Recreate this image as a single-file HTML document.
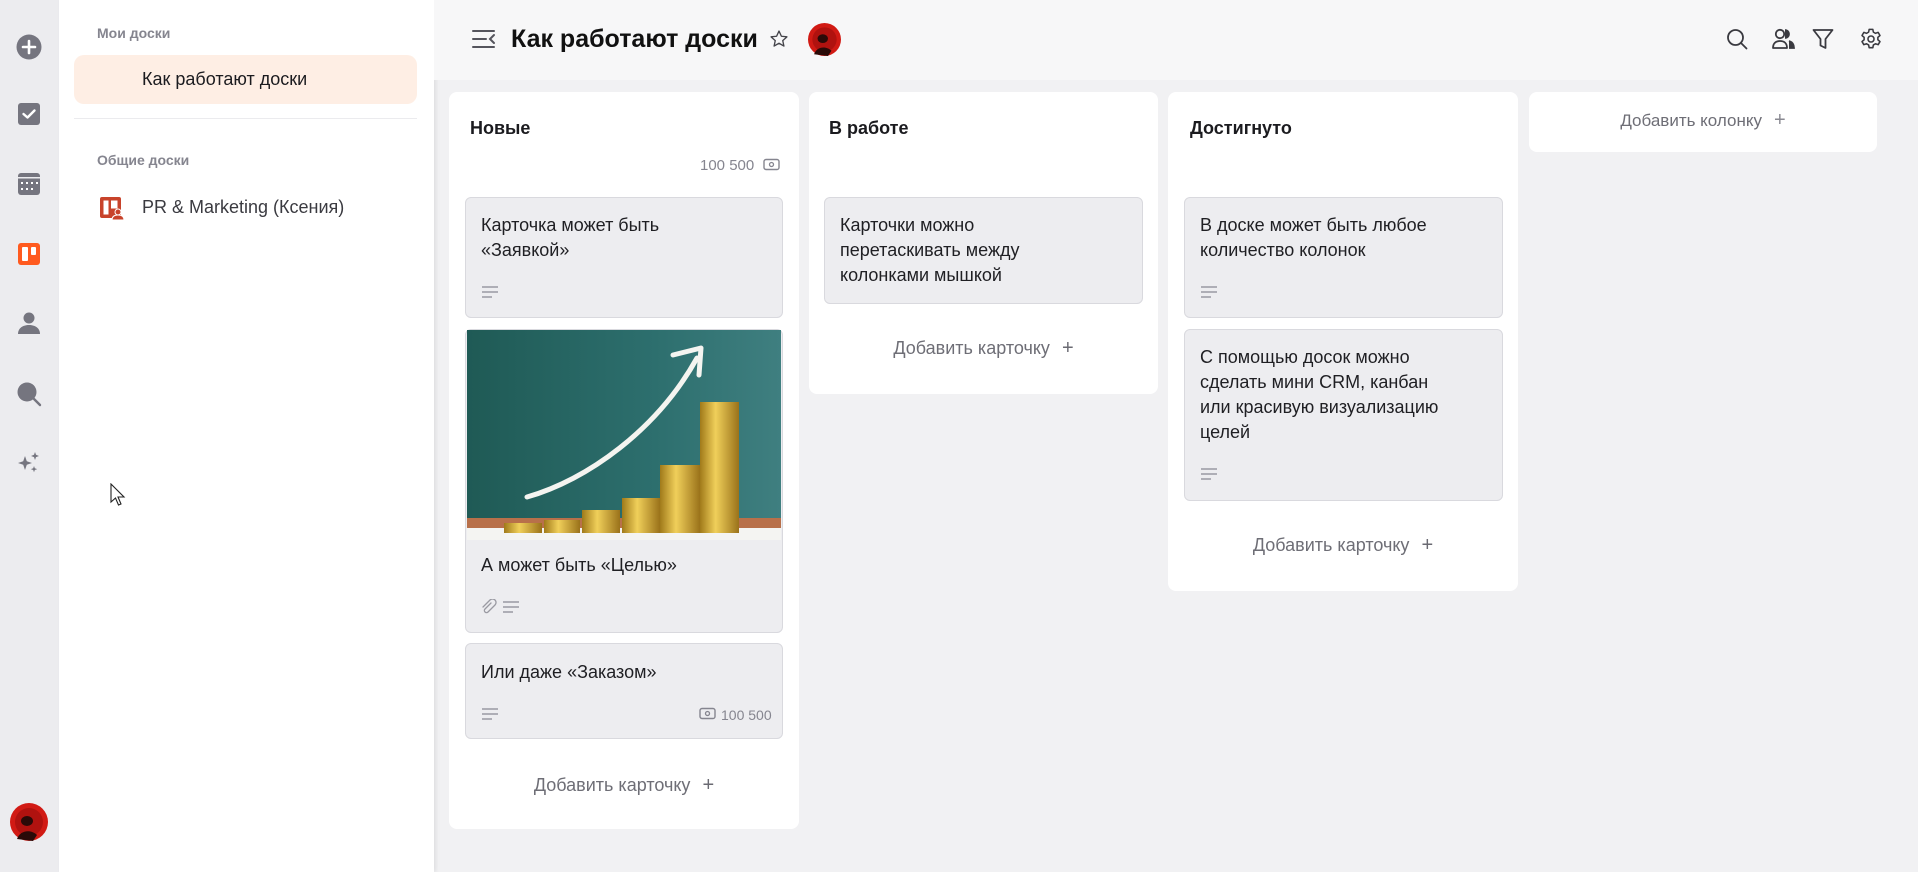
<!DOCTYPE html>
<html><head><meta charset="utf-8">
<style>
*{box-sizing:border-box;margin:0;padding:0}
body{width:1918px;height:872px;overflow:hidden;background:#f1f1f3;font-family:"Liberation Sans","Noto Sans CJK SC",sans-serif;position:relative;color:#1b1b1f}
.a{position:absolute}
.rail{left:0;top:0;width:59px;height:872px;background:#ececef}
.side{left:59px;top:0;width:375px;height:872px;background:#fff;box-shadow:2px 0 4px rgba(0,0,0,.08)}
.hdr{left:434px;top:0;width:1484px;height:80px;background:#f7f7f8}
.sec{font-size:14px;font-weight:bold;color:#85858f}
.col{background:#fff;border-radius:8px}
.ct{font-size:18px;font-weight:bold;color:#1b1b1f}
.card{background:#ededf0;border:1px solid #d9d9de;border-radius:6px;overflow:hidden}
.txt{font-size:18px;line-height:25px;color:#1f1f23}
.add{font-size:18px;color:#6e6e76;text-align:center}
.add b{font-weight:normal;font-size:20px;margin-left:12px;color:#6a6a72}
.small{font-size:14px;color:#85858f}
</style></head><body>
<div class="a rail"></div>
<div class="a side"></div>
<div class="a hdr"></div>

<!-- rail icons -->
<svg class="a" style="left:15px;top:33px" width="28" height="28" viewBox="0 0 28 28"><circle cx="14" cy="14" r="12.5" fill="#75757f"/><path d="M14 8v12M8 14h12" stroke="#fff" stroke-width="2.6" stroke-linecap="round"/></svg>
<svg class="a" style="left:17px;top:102px" width="24" height="24" viewBox="0 0 24 24"><rect x="1" y="1" width="22" height="22" rx="3" fill="#75757f"/><path d="M6.5 12l4 3.5 7-7" stroke="#fff" stroke-width="2.4" fill="none" stroke-linecap="round" stroke-linejoin="round"/></svg>
<svg class="a" style="left:17px;top:172px" width="24" height="24" viewBox="0 0 24 24"><rect x="1" y="1" width="22" height="22" rx="3" fill="#75757f"/><rect x="1" y="5" width="22" height="1.5" fill="#ececef"/><g fill="#fff"><rect x="4" y="10" width="2" height="2"/><rect x="9" y="10" width="2" height="2"/><rect x="14" y="10" width="2" height="2"/><rect x="19" y="10" width="2" height="2"/><rect x="4" y="16" width="2" height="2"/><rect x="9" y="16" width="2" height="2"/><rect x="14" y="16" width="2" height="2"/></g></svg>
<svg class="a" style="left:17px;top:242px" width="24" height="24" viewBox="0 0 24 24"><rect x="1" y="1" width="22" height="22" rx="3" fill="#ff5a1f"/><rect x="5" y="5" width="6" height="14" rx="1" fill="#fff"/><rect x="14" y="5" width="5" height="8" rx="1" fill="#fff"/></svg>
<svg class="a" style="left:17px;top:311px" width="24" height="24" viewBox="0 0 24 24"><circle cx="12" cy="7" r="5.5" fill="#75757f"/><path d="M1 23c0-6 5-9 11-9s11 3 11 9z" fill="#75757f"/></svg>
<svg class="a" style="left:16px;top:381px" width="26" height="26" viewBox="0 0 26 26"><circle cx="11" cy="11" r="9.5" fill="#75757f"/><path d="M18 18l6 6" stroke="#75757f" stroke-width="2.4" stroke-linecap="round"/></svg>
<svg class="a" style="left:17px;top:451px" width="24" height="24" viewBox="0 0 24 24" fill="#75757f"><path d="M8 5l1.8 5.2L15 12l-5.2 1.8L8 19l-1.8-5.2L1 12l5.2-1.8z"/><path d="M18 1l1 2.8L22 5l-3 1.1L18 9l-1-2.9L14 5l3-1.2z"/><path d="M17 15l.8 2.3 2.4.8-2.4.9L17 21.3l-.8-2.3-2.4-.9 2.4-.8z"/></svg>
<svg class="a" style="left:10px;top:803px" width="38" height="38" viewBox="0 0 38 38"><circle cx="19" cy="19" r="19" fill="#d11a14"/><circle cx="19" cy="19" r="14" fill="#b0120f"/><ellipse cx="17" cy="18" rx="6" ry="5" fill="#2a0a08"/><path d="M7 36c3-9 14-10 20-4l-4 6z" fill="#2a0a08"/></svg>

<!-- sidebar -->
<div class="a sec" style="left:97px;top:25px">Мои доски</div>
<div class="a" style="left:74px;top:55px;width:343px;height:49px;background:#feeee4;border-radius:10px"></div>
<div class="a" style="left:142px;top:69px;font-size:18px;color:#1b1b1f">Как работают доски</div>
<div class="a" style="left:74px;top:118px;width:343px;height:1px;background:#ebebee"></div>
<div class="a sec" style="left:97px;top:152px">Общие доски</div>
<svg class="a" style="left:99px;top:196px" width="26" height="24" viewBox="0 0 26 24"><rect x="1" y="1" width="21" height="21" rx="2" fill="#c8432b"/><rect x="4.5" y="4.5" width="5" height="14" fill="#fff"/><rect x="12" y="4.5" width="6.5" height="8" fill="#fff"/><circle cx="19" cy="16" r="3" fill="#c8432b" stroke="#fff" stroke-width="1"/><path d="M13 24c0-4 3-5 6-5s6 1 6 5z" fill="#c8432b" stroke="#fff" stroke-width="1"/></svg>
<div class="a" style="left:142px;top:197px;font-size:18px;color:#3a3a40">PR &amp; Marketing (Ксения)</div>
<svg class="a" style="left:110px;top:483px" width="18" height="24" viewBox="0 0 18 24"><path d="M1 1v18l4.5-4 3 7 2.5-1-3-7h6z" fill="#fff" stroke="#222" stroke-width="1.1"/></svg>

<!-- header -->
<svg class="a" style="left:472px;top:28px" width="24" height="22" viewBox="0 0 24 22"><path d="M1 3h21M1 11h13M1 19h21M22 7l-4 4 4 4" stroke="#55555d" stroke-width="2" fill="none" stroke-linecap="round"/></svg>
<div class="a" style="left:511px;top:25px;font-size:25px;font-weight:bold;color:#111">Как работают доски</div>
<svg class="a" style="left:769px;top:29px" width="20" height="20" viewBox="0 0 24 24"><path d="M12 2.5l2.9 6.2 6.6.7-5 4.5 1.4 6.6L12 17.1l-5.9 3.4 1.4-6.6-5-4.5 6.6-.7z" fill="none" stroke="#44444a" stroke-width="1.6" stroke-linejoin="round"/></svg>
<svg class="a" style="left:808px;top:23px" width="33" height="33" viewBox="0 0 38 38"><circle cx="19" cy="19" r="19" fill="#d11a14"/><circle cx="19" cy="19" r="14" fill="#b0120f"/><ellipse cx="17" cy="18" rx="6" ry="5" fill="#2a0a08"/><path d="M7 36c3-9 14-10 20-4l-4 6z" fill="#2a0a08"/></svg>
<svg class="a" style="left:1726px;top:28px" width="22" height="22" viewBox="0 0 22 22"><circle cx="9.5" cy="9.5" r="7.5" fill="none" stroke="#3a3a40" stroke-width="1.8"/><path d="M15 15l5.5 5.5" stroke="#3a3a40" stroke-width="1.8" stroke-linecap="round"/></svg>
<svg class="a" style="left:1772px;top:28px" width="24" height="22" viewBox="0 0 24 22"><circle cx="8" cy="6" r="4.2" fill="none" stroke="#3a3a40" stroke-width="1.8"/><path d="M1 20c0-5 3-7 7-7s7 2 7 7z" fill="none" stroke="#3a3a40" stroke-width="1.8" stroke-linejoin="round"/><path d="M13 2a4 4 0 0 1 0 8M17 13c3 1 5 3 5 7h-5" fill="#3a3a40" stroke="#3a3a40" stroke-width="1.8"/></svg>
<svg class="a" style="left:1812px;top:28px" width="22" height="22" viewBox="0 0 22 22"><path d="M1.5 2h19l-7 9v9l-5-2.5V11z" fill="none" stroke="#3a3a40" stroke-width="1.8" stroke-linejoin="round"/></svg>
<svg class="a" style="left:1860px;top:28px" width="22" height="22" viewBox="0 0 24 24"><path d="M10 1.5h4l.6 3 2.3 1.3 2.9-1 2 3.4-2.3 2v2.6l2.3 2-2 3.4-2.9-1-2.3 1.3-.6 3h-4l-.6-3-2.3-1.3-2.9 1-2-3.4 2.3-2v-2.6l-2.3-2 2-3.4 2.9 1 2.3-1.3z" fill="none" stroke="#3a3a40" stroke-width="1.7" stroke-linejoin="round"/><circle cx="12" cy="12" r="3.3" fill="none" stroke="#3a3a40" stroke-width="1.7"/></svg>

<!-- columns -->
<div class="a col" style="left:449px;top:92px;width:350px;height:737px"></div>
<div class="a col" style="left:809px;top:92px;width:349px;height:302px"></div>
<div class="a col" style="left:1168px;top:92px;width:350px;height:499px"></div>
<div class="a col" style="left:1529px;top:92px;width:348px;height:60px"></div>
<div class="a add" style="left:1529px;top:109px;width:348px;font-size:17px">Добавить колонку<b style="color:#8a8a92">+</b></div>

<!-- col1 -->
<div class="a ct" style="left:470px;top:118px">Новые</div>
<div class="a small" style="left:700px;top:157px;font-size:15px">100 500</div>
<svg class="a" style="left:763px;top:158px" width="17" height="13" viewBox="0 0 17 13"><rect x="1" y="1.5" width="15" height="10" rx="2" fill="none" stroke="#85858f" stroke-width="1.4"/><circle cx="8.5" cy="6.5" r="2" fill="none" stroke="#85858f" stroke-width="1.3"/></svg>

<div class="a card" style="left:465px;top:197px;width:318px;height:121px"></div>
<div class="a txt" style="left:481px;top:213px">Карточка может быть<br>«Заявкой»</div>
<svg class="a" style="left:481px;top:285px" width="18" height="14" viewBox="0 0 18 14"><path d="M1 2h16M1 7h16M1 12h10" stroke="#9a9aa2" stroke-width="1.4"/></svg>

<div class="a card" style="left:465px;top:329px;width:318px;height:304px"></div>
<svg class="a" style="left:467px;top:330px" width="314" height="210" viewBox="0 0 314 210">
<defs><linearGradient id="bg" x1="0" y1="0" x2="1" y2="0"><stop offset="0" stop-color="#1f5a55"/><stop offset=".6" stop-color="#2d6f6e"/><stop offset="1" stop-color="#3f7f80"/></linearGradient>
<linearGradient id="gd" x1="0" y1="0" x2="1" y2="0"><stop offset="0" stop-color="#a07a1a"/><stop offset=".4" stop-color="#f0cf5a"/><stop offset="1" stop-color="#9a721a"/></linearGradient></defs>
<rect width="314" height="195" fill="url(#bg)"/>
<rect y="188" width="314" height="10" fill="#b8704a"/>
<rect y="198" width="314" height="12" fill="#f4f4f2"/>
<path d="M60 167C120 150 190 100 230 28" stroke="#f4f4f0" stroke-width="5" fill="none" stroke-linecap="round"/>
<path d="M206 25L234 18 232 45" stroke="#f4f4f0" stroke-width="5" fill="none" stroke-linecap="round" stroke-linejoin="round"/>
<rect x="37" y="193" width="38" height="10" fill="url(#gd)"/>
<rect x="77" y="190" width="36" height="13" fill="url(#gd)"/>
<rect x="115" y="180" width="38" height="23" fill="url(#gd)"/>
<rect x="155" y="168" width="38" height="35" fill="url(#gd)"/>
<rect x="193" y="135" width="40" height="68" fill="url(#gd)"/>
<rect x="233" y="72" width="39" height="131" fill="url(#gd)"/>
</svg>
<div class="a txt" style="left:481px;top:553px">А может быть «Целью»</div>
<svg class="a" style="left:481px;top:599px" width="40" height="16" viewBox="0 0 40 16"><path d="M10 4l-6 6a2 2 0 0 0 3 3l7-7a3.5 3.5 0 0 0-5-5L2 8" stroke="#9a9aa2" stroke-width="1.3" fill="none" stroke-linecap="round"/><path d="M22 3h16M22 8h16M22 13h10" stroke="#9a9aa2" stroke-width="1.4"/></svg>

<div class="a card" style="left:465px;top:643px;width:318px;height:96px"></div>
<div class="a txt" style="left:481px;top:660px">Или даже «Заказом»</div>
<svg class="a" style="left:481px;top:707px" width="18" height="14" viewBox="0 0 18 14"><path d="M1 2h16M1 7h16M1 12h10" stroke="#9a9aa2" stroke-width="1.4"/></svg>
<svg class="a" style="left:699px;top:707px" width="17" height="13" viewBox="0 0 17 13"><rect x="1" y="1.5" width="15" height="10" rx="2" fill="none" stroke="#85858f" stroke-width="1.4"/><circle cx="8.5" cy="6.5" r="2" fill="none" stroke="#85858f" stroke-width="1.3"/></svg>
<div class="a small" style="left:721px;top:707px">100 500</div>

<div class="a add" style="left:449px;top:774px;width:350px">Добавить карточку<b>+</b></div>

<!-- col2 -->
<div class="a ct" style="left:829px;top:118px">В работе</div>
<div class="a card" style="left:824px;top:197px;width:319px;height:107px"></div>
<div class="a txt" style="left:840px;top:213px">Карточки можно<br>перетаскивать между<br>колонками мышкой</div>
<div class="a add" style="left:809px;top:337px;width:349px">Добавить карточку<b>+</b></div>

<!-- col3 -->
<div class="a ct" style="left:1190px;top:118px">Достигнуто</div>
<div class="a card" style="left:1184px;top:197px;width:319px;height:121px"></div>
<div class="a txt" style="left:1200px;top:213px">В доске может быть любое<br>количество колонок</div>
<svg class="a" style="left:1200px;top:285px" width="18" height="14" viewBox="0 0 18 14"><path d="M1 2h16M1 7h16M1 12h10" stroke="#9a9aa2" stroke-width="1.4"/></svg>
<div class="a card" style="left:1184px;top:329px;width:319px;height:172px"></div>
<div class="a txt" style="left:1200px;top:345px">С помощью досок можно<br>сделать мини CRM, канбан<br>или красивую визуализацию<br>целей</div>
<svg class="a" style="left:1200px;top:467px" width="18" height="14" viewBox="0 0 18 14"><path d="M1 2h16M1 7h16M1 12h10" stroke="#9a9aa2" stroke-width="1.4"/></svg>
<div class="a add" style="left:1168px;top:534px;width:350px">Добавить карточку<b>+</b></div>
</body></html>
